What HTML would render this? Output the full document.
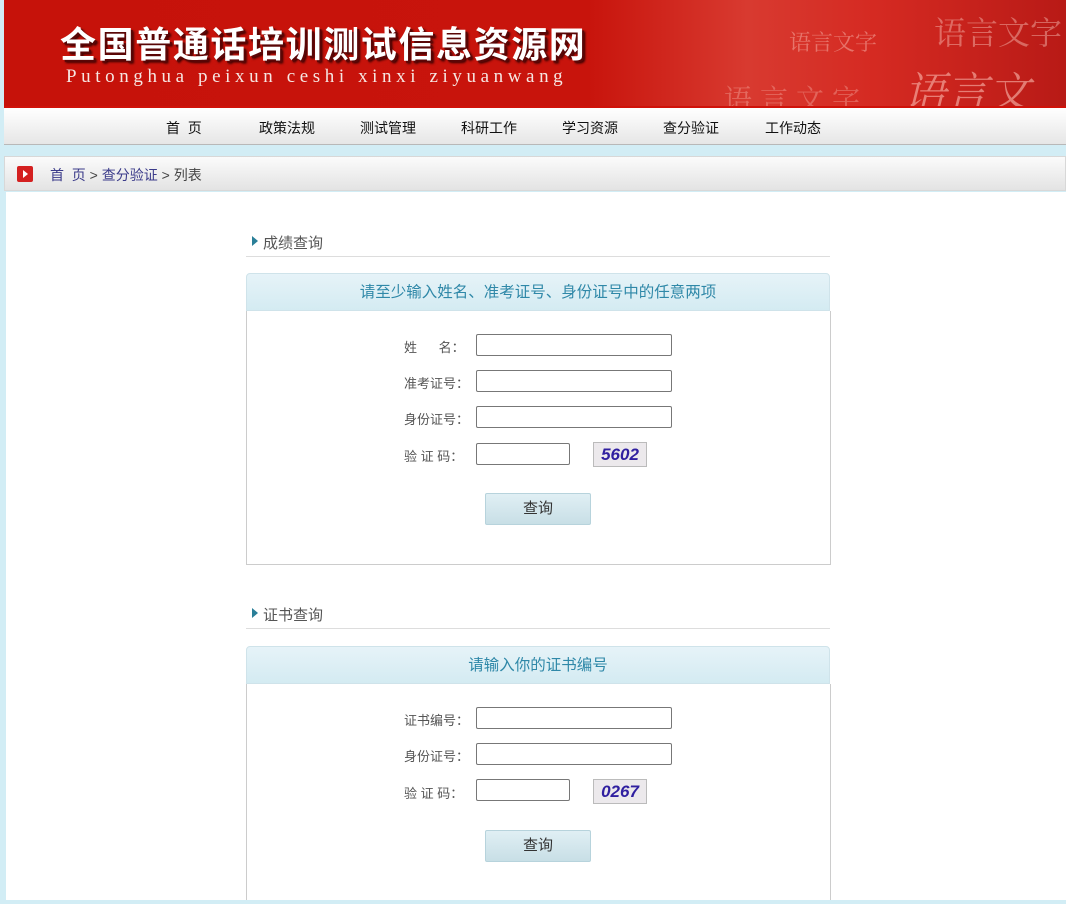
<!DOCTYPE html>
<html><head><meta charset="utf-8"><style>
*{margin:0;padding:0;box-sizing:border-box}
body{width:1066px;height:904px;background:#d2edf5;position:relative;overflow:hidden;font-family:"Liberation Sans","Noto Sans CJK SC","WenQuanYi Zen Hei",sans-serif;font-size:14px;color:#444}
.a{position:absolute}
#hdr{left:4px;top:0;width:1062px;height:108px;background:linear-gradient(90deg,#c6120a 0%,#c8140c 55%,#d83a30 70%,#d52a22 82%,#b81a16 100%);overflow:hidden;border-bottom:2px solid #d0120a}
.t1{left:56px;top:22px;font-size:36px;font-weight:bold;color:#fff;letter-spacing:1.6px;text-shadow:2px 2px 0 #5a0606,3px 3px 2px #300;font-family:"Noto Sans CJK SC",sans-serif;line-height:40px}
.t2{left:62px;top:66px;font-size:19px;color:#f6e6e2;letter-spacing:4.6px;font-family:"Liberation Serif",serif}
.bg{color:rgba(255,215,205,.4);font-family:"Noto Serif CJK SC",serif}
#nav{left:4px;top:108px;width:1062px;height:37px;background:linear-gradient(#fff,#e6e6e6);border-bottom:1px solid #b8b8b8}
#nav span{position:absolute;top:10px;font-size:14px;color:#111}
#bc{left:4px;top:156px;width:1062px;height:35px;background:linear-gradient(#fbfbfb,#e3e3e3);border:1px solid #d8d8d8}
#main{left:6px;top:192px;width:1060px;height:708px;background:#fff}
.sec{font-size:15px;color:#555}
.tri{width:0;height:0;border-left:6px solid #2a7f98;border-top:5px solid transparent;border-bottom:5px solid transparent}
.hr{height:1px;background:#ddd}
.ph{background:linear-gradient(#e6f3f8,#d4ebf2);border:1px solid #cfe3ea;border-radius:4px 4px 0 0;text-align:center;color:#2f88a8;font-size:15.5px}
.pb{border:1px solid #ccc;border-top:none}
.lb{font-size:13px;color:#555}
.in{border:1px solid #777;border-radius:2px;height:22px;background:#fff}
.btn{width:106px;height:32px;background:linear-gradient(#e0eff4,#c8dfe6);border:1px solid #b7d3dc;border-radius:2px;text-align:center;line-height:30px;font-size:15px;color:#333}
.cap{width:54px;height:25px;background:#ece9ec;border:1px solid #bbb;font-style:italic;font-weight:bold;font-size:17px;color:#3020a0;text-align:center;line-height:24px;font-family:"Liberation Sans",sans-serif}
</style></head><body>
<div id="hdr" class="a">
<div class="a bg" style="left:785px;top:26px;font-size:22px">语言文字</div>
<div class="a bg" style="left:930px;top:8px;font-size:32px">语言文字</div>
<div class="a bg" style="left:720px;top:78px;font-size:28px;letter-spacing:8px;color:rgba(255,215,205,.3)">语言文字</div>
<div class="a bg" style="left:900px;top:60px;font-size:42px;color:rgba(255,200,190,.55);font-style:italic">语言文字</div>
<div class="a t1">全国普通话培训测试信息资源网</div>
<div class="a t2">Putonghua peixun ceshi xinxi ziyuanwang</div>
</div>
<div id="nav" class="a">
<span style="left:162px">首&nbsp;&nbsp;页</span><span style="left:255px">政策法规</span><span style="left:356px">测试管理</span><span style="left:457px">科研工作</span><span style="left:558px">学习资源</span><span style="left:659px">查分验证</span><span style="left:761px">工作动态</span>
</div>
<div id="bc" class="a">
<div class="a" style="left:12px;top:9px;width:16px;height:16px;background:#d42020;border-radius:2px"><div class="a" style="left:6px;top:4px;border-left:5px solid #fff;border-top:4px solid transparent;border-bottom:4px solid transparent"></div></div>
<div class="a" style="left:45px;top:8px;font-size:14px;color:#444"><span style="color:#3b3b8a">首&nbsp;&nbsp;页</span> &gt; <span style="color:#3b3b8a">查分验证</span> &gt; 列表</div>
</div>
<div id="main" class="a"></div>

<div class="a tri" style="left:252px;top:236px"></div>
<div class="a sec" style="left:263px;top:232px">成绩查询</div>
<div class="a hr" style="left:246px;top:256px;width:584px"></div>
<div class="a ph" style="left:246px;top:273px;width:584px;height:38px;line-height:38px">请至少输入姓名、准考证号、身份证号中的任意两项</div>
<div class="a pb" style="left:246px;top:311px;width:585px;height:254px"></div>
<div class="a lb" style="left:404px;top:337px">姓&nbsp;&nbsp;&nbsp;&nbsp;&nbsp;&nbsp;名：</div>
<div class="a in" style="left:476px;top:334px;width:196px"></div>
<div class="a lb" style="left:404px;top:373px">准考证号：</div>
<div class="a in" style="left:476px;top:370px;width:196px"></div>
<div class="a lb" style="left:404px;top:409px">身份证号：</div>
<div class="a in" style="left:476px;top:406px;width:196px"></div>
<div class="a lb" style="left:404px;top:446px">验&nbsp;证&nbsp;码：</div>
<div class="a in" style="left:476px;top:443px;width:94px"></div>
<div class="a cap" style="left:593px;top:442px">5602</div>
<div class="a btn" style="left:485px;top:493px">查询</div>

<div class="a tri" style="left:252px;top:608px"></div>
<div class="a sec" style="left:263px;top:604px">证书查询</div>
<div class="a hr" style="left:246px;top:628px;width:584px"></div>
<div class="a ph" style="left:246px;top:646px;width:584px;height:38px;line-height:38px">请输入你的证书编号</div>
<div class="a pb" style="left:246px;top:684px;width:585px;height:220px"></div>
<div class="a lb" style="left:404px;top:710px">证书编号：</div>
<div class="a in" style="left:476px;top:707px;width:196px"></div>
<div class="a lb" style="left:404px;top:746px">身份证号：</div>
<div class="a in" style="left:476px;top:743px;width:196px"></div>
<div class="a lb" style="left:404px;top:783px">验&nbsp;证&nbsp;码：</div>
<div class="a in" style="left:476px;top:779px;width:94px"></div>
<div class="a cap" style="left:593px;top:779px">0267</div>
<div class="a btn" style="left:485px;top:830px">查询</div>
<div class="a" style="left:0;top:900px;width:1066px;height:4px;background:#d2edf5"></div>
</body></html>
